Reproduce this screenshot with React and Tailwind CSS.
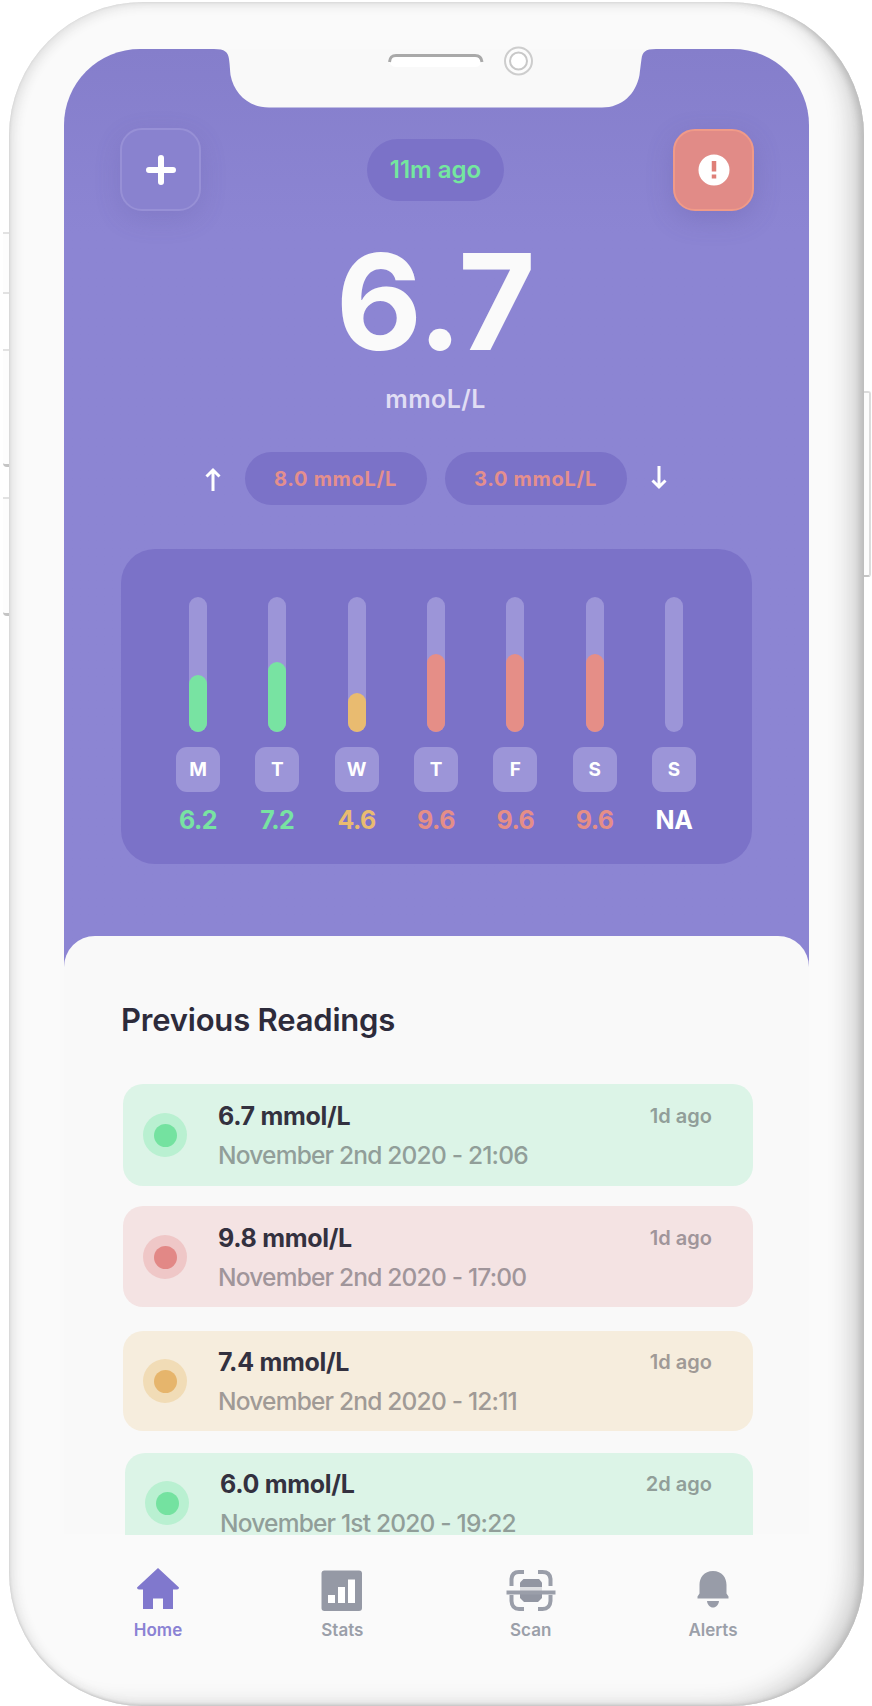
const week = [
  { day: "M", value: "6.2", fill: 57, bar: "bg-[#78e3a2]", text: "text-[#78e3a2]" },
  { day: "T", value: "7.2", fill: 70, bar: "bg-[#78e3a2]", text: "text-[#78e3a2]" },
  { day: "W", value: "4.6", fill: 39, bar: "bg-[#e9bb70]", text: "text-[#e9bb70]" },
  { day: "T", value: "9.6", fill: 78, bar: "bg-[#e58e87]", text: "text-[#e58e87]" },
  { day: "F", value: "9.6", fill: 78, bar: "bg-[#e58e87]", text: "text-[#e58e87]" },
  { day: "S", value: "9.6", fill: 78, bar: "bg-[#e58e87]", text: "text-[#e58e87]" },
  { day: "S", value: "NA", fill: 0, bar: "", text: "text-white" },
];

const green = { card: "bg-[#dcf4e7]", ring: "bg-[#b9f0d1]", dot: "bg-[#74e2a0]", sub: "text-[#919e99]" };
const red = { card: "bg-[#f4e3e3]", ring: "bg-[#efc7c7]", dot: "bg-[#e28886]", sub: "text-[#a0959a]" };
const amber = { card: "bg-[#f6eddd]", ring: "bg-[#f1dcb6]", dot: "bg-[#e6b56c]", sub: "text-[#a09a96]" };

const readings = [
  { value: "6.7 mmol/L", date: "November 2nd 2020 - 21:06", ago: "1d ago", tone: green, box: "pt-[17px] ml-[59px] mr-[56px] h-[102px] rounded-[20px]" },
  { value: "9.8 mmol/L", date: "November 2nd 2020 - 17:00", ago: "1d ago", tone: red, box: "pt-[17px] mt-5 ml-[59px] mr-[56px] h-[101px] rounded-[20px]" },
  { value: "7.4 mmol/L", date: "November 2nd 2020 - 12:11", ago: "1d ago", tone: amber, box: "pt-[16px] mt-6 ml-[59px] mr-[56px] h-[100px] rounded-[20px]" },
  { value: "6.0 mmol/L", date: "November 1st 2020 - 19:22", ago: "2d ago", tone: green, box: "pt-[16px] mt-[22px] ml-[61px] mr-[56px] h-[82px] rounded-t-[20px]" },
];

function Notch() {
  return (
    <svg className="mx-auto block h-[59px] w-[435px] shrink-0 -translate-x-px overflow-visible" viewBox="0 0 435 59">
      <path
        d="M-4 0C7 0 10 3 11 10C12 17 12 22 12.500 26C16 45 31 58.500 51 58.500H384C404 58.500 418 45 421.500 26C422 22 422.500 17 423.500 10C424.500 3 427 0 438 0Z"
        fill="#f9f9f9"
      />
      <rect x="171" y="5" width="93" height="13" rx="6.500" fill="#fff" />
      <path d="M171.500 13C172 8 174 6.500 178 6.500H257C261 6.500 263.500 8 264 13" fill="none" stroke="#a9a9a9" strokeWidth="3" />
      <circle cx="300.500" cy="12" r="13.500" fill="#fcfcfc" stroke="#cdcdcd" strokeWidth="2" />
      <circle cx="300.500" cy="12" r="8.500" fill="#fff" stroke="#c8c8c8" strokeWidth="2" />
    </svg>
  );
}

function Header() {
  return (
    <div className="mt-[20px] flex items-center justify-between pr-[55px] pl-[56px]">
      <div className="flex h-[83px] w-[81px] items-center justify-center rounded-[22px] border-2 border-[#9790d6] bg-[#8982cf] shadow-[0_8px_26px_rgba(90,80,150,0.18)]">
        <svg className="size-[32px]" viewBox="0 0 32 32" fill="none" stroke="#fff" strokeWidth="6" strokeLinecap="round">
          <path d="M16 4V28M4 16H28" />
        </svg>
      </div>
      <div className="mr-[3px] flex h-[62px] w-[137px] items-center justify-center rounded-full bg-[#7b72c8] text-[24px] font-semibold text-[#74e79f]">
        11m ago
      </div>
      <div className="flex h-[82px] w-[81px] items-center justify-center rounded-[22px] border-2 border-[#f09a88] bg-[#e18b87] shadow-[0_8px_26px_rgba(90,80,150,0.25)]">
        <svg className="size-[32px]" viewBox="0 0 32 32">
          <circle cx="16" cy="16" r="15.500" fill="#fff" />
          <path d="M16 7V17.500M16 20.500V24.500" stroke="#df7f78" strokeWidth="4.500" />
        </svg>
      </div>
    </div>
  );
}

function Arrow({ down }) {
  return (
    <svg className="h-[24px] w-[16px]" viewBox="0 0 16 24" fill="none" stroke="#fff" strokeWidth="3">
      <path d={down ? "M8 0V21M1.500 14.500L8 21L14.500 14.500" : "M8 24V3M1.500 9.500L8 3L14.500 9.500"} />
    </svg>
  );
}

function WeekCard() {
  return (
    <div className="mt-[44px] mr-[57px] ml-[57px] flex h-[315px] justify-between rounded-[34px] bg-[#7b72c8] pt-[48px] pr-[56px] pl-[55px]">
      {week.map((d, i) => (
        <div key={i} className="flex w-[44px] flex-col items-center">
          <div className="flex h-[135px] w-[18px] items-end rounded-full bg-[#9c95d8]">
            <div className={"w-full rounded-full " + d.bar} style={{ height: d.fill }} />
          </div>
          <div className="mt-[15px] flex h-[45px] w-[44px] shrink-0 items-center justify-center rounded-[11px] bg-[#9c95d8] pt-[2px] text-[19px] font-bold text-white">
            {d.day}
          </div>
          <div className={"mt-[13px] text-[25px] leading-[30px] font-bold whitespace-nowrap tracking-[-0.5px] " + d.text}>{d.value}</div>
        </div>
      ))}
    </div>
  );
}

function Reading({ item }) {
  return (
    <div className={"flex pr-[41px] pl-[20px] " + item.box + " " + item.tone.card}>
      <div className={"mt-[12px] flex size-[44px] shrink-0 items-center justify-center rounded-full " + item.tone.ring}>
        <div className={"size-[23px] rounded-full " + item.tone.dot} />
      </div>
      <div className="ml-[31px] flex-1 whitespace-nowrap">
        <div className="text-[25px] leading-[30px] font-bold tracking-[-0.3px] text-[#33313f]">{item.value}</div>
        <div className={"mt-[10px] text-[24.500px] leading-[28px] font-medium tracking-[-0.8px] " + item.tone.sub}>{item.date}</div>
      </div>
      <div className={"text-[20px] leading-[30px] font-semibold whitespace-nowrap " + item.tone.sub}>{item.ago}</div>
    </div>
  );
}

function HomeIcon() {
  return (
    <svg className="h-[44px] w-[50px]" viewBox="0 0 50 44" fill="#8078cd">
      <path d="M25 1L46 20.500Q46 22.500 44 22.500H40V42H30V31.500H20V42H10V22.500H6Q4 22.500 4 20.500Z" />
    </svg>
  );
}

function StatsIcon() {
  return (
    <svg className="h-[44px] w-[50px]" viewBox="0 0 50 44">
      <rect x="4.500" y="3.500" width="40.500" height="40.500" rx="3" fill="#9599a5" />
      <path d="M14.500 36V28M24.500 36V20M34.500 36V12.500" stroke="#fff" strokeWidth="7" />
    </svg>
  );
}

function ScanIcon() {
  return (
    <svg className="h-[44px] w-[50px] overflow-visible" viewBox="0 0 50 44">
      <g fill="none" stroke="#9a9ea9" strokeWidth="4">
        <path d="M5.500 19V12Q6 5 13 5H18M32 5H36.500Q44 5 44.500 12V19" />
        <path d="M5.500 28V34Q6 42 13 42H18M32 42H36.500Q44 42 44.500 34V28" />
      </g>
      <path d="M14 20V15.500L17.500 12H33L36 15.500V20Z" fill="#9296a2" />
      <path d="M14 27H36V31L32 35H18L14 31Z" fill="#9296a2" />
      <rect x="14" y="20" width="22" height="4" fill="#dedfe2" />
      <rect x="0.500" y="23.500" width="49" height="4" fill="#9a9ea9" />
    </svg>
  );
}

function BellIcon() {
  return (
    <svg className="h-[44px] w-[50px]" viewBox="0 0 50 44" fill="#989ca8">
      <path d="M25 4C34 4 38.500 10.500 38.500 18V26.500L40.500 29.500V31.500H9.500V29.500L11.500 26.500V18C11.500 10.500 16 4 25 4Z" />
      <path d="M19 34H31C30.500 38 28 40.500 25 40.500S19.500 38 19 34Z" />
    </svg>
  );
}

const tabs = [
  { label: "Home", Icon: HomeIcon, color: "text-[#8a82d4]", place: "" },
  { label: "Stats", Icon: StatsIcon, color: "text-[#9b9fa9]", place: "-ml-px" },
  { label: "Scan", Icon: ScanIcon, color: "text-[#9b9fa9]", place: "ml-[3px]" },
  { label: "Alerts", Icon: BellIcon, color: "text-[#9b9fa9]", place: "-ml-[3px]" },
];

export default function App() {
  return (
    <div className="relative h-[1706px] w-[872px] overflow-hidden bg-white font-['Inter','Liberation_Sans',sans-serif]">
      <div className="absolute top-[232px] left-[3px] h-[62px] w-[10px] border-y-2 border-[#e2e2e2] bg-[#fdfdfd]" />
      <div className="absolute top-[349px] left-[3px] h-[118px] w-[10px] rounded-bl-[4px] border-t-2 border-b-3 border-t-[#e2e2e2] border-b-[#c4c4c4] bg-[#fdfdfd]" />
      <div className="absolute top-[497px] left-[3px] h-[119px] w-[10px] rounded-bl-[4px] border-t-2 border-b-3 border-t-[#e2e2e2] border-b-[#c4c4c4] bg-[#fdfdfd]" />
      <div className="absolute top-[391px] left-[860px] h-[186px] w-[11px] rounded-r-[3px] border-2 border-[#dcdcdc] border-b-[#c4c4c4] bg-[#fdfdfd]" />

      <div className="relative mt-[2px] ml-[9px] h-[1704px] w-[855px] rounded-[134px] bg-[#fafafa] pt-[47px] pl-[55px] shadow-[inset_-7px_0_6px_-3px_#bcbcbc,inset_0_-1px_3px_#c4c4c4,inset_-22px_-8px_22px_-8px_#d2d2d2,inset_4px_2px_12px_#dedede]">
        <div className="flex h-[1620px] w-[745px] flex-col">
          <div className="flex h-[918px] shrink-0 flex-col rounded-t-[76px] bg-linear-to-b from-[#857ecb] to-[#8c85d3] to-20%">
            <Notch />
            <Header />
            <div className="mt-[26px] mr-[2px] text-center text-[133px] leading-[130px] font-bold tracking-[-0.5px] text-[#fafafa]">6.7</div>
            <div className="mt-[17px] mr-[2px] text-center text-[25px] leading-[30px] font-semibold tracking-[0.4px] text-[#e0ddf4]">mmoL/L</div>
            <div className="mt-[38px] mr-[2px] flex items-center justify-center">
              <Arrow />
              <div className="ml-[24px] flex h-[53px] w-[182px] items-center justify-center rounded-full bg-[#7b72c8] text-[20px] font-bold tracking-[0.7px] text-[#e48f8d]">8.0 mmoL/L</div>
              <div className="ml-[18px] flex h-[53px] w-[182px] items-center justify-center rounded-full bg-[#7b72c8] text-[20px] font-bold tracking-[0.7px] text-[#e48f8d]">3.0 mmoL/L</div>
              <div className="ml-[24px] flex -translate-y-px">
                <Arrow down />
              </div>
            </div>
            <WeekCard />
            <div className="mt-[72px] h-[31px] shrink-0 rounded-t-[32px] bg-[#f9f9f9]" />
          </div>
          <div className="flex h-[567px] shrink-0 flex-col bg-[#f9f9f9]">
            <h2 className="mt-[33px] ml-[57px] text-[31px] leading-[40px] font-semibold tracking-[-0.2px] text-[#2d2b3b]">Previous Readings</h2>
            <div className="mt-[44px] flex h-[451px] flex-col">
              {readings.map((r) => (
                <Reading key={r.value} item={r} />
              ))}
            </div>
          </div>
          <nav className="mt-[33px] flex justify-between pr-[61px] pl-[59px]">
            {tabs.map(({ label, Icon, color, place }) => (
              <div key={label} className={"flex w-[70px] flex-col items-center " + place}>
                <Icon />
                <div className={"mt-[8px] text-[17px] leading-[22px] font-semibold " + color}>{label}</div>
              </div>
            ))}
          </nav>
        </div>
      </div>
    </div>
  );
}
